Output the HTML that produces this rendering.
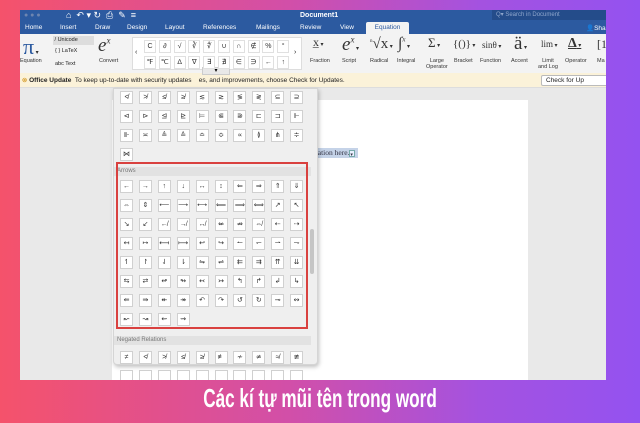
<!DOCTYPE html><html><head><meta charset="utf-8"><style>
*{margin:0;padding:0;box-sizing:border-box}
body{width:640px;height:423px;overflow:hidden;background:linear-gradient(90deg,#f5526b 0%,#d24fa8 45%,#a452e0 75%,#9452f0 100%);font-family:"Liberation Sans",sans-serif;position:relative}
.a{position:absolute}
.win{left:20px;top:10px;width:586px;height:370px;background:#e9e9e9;overflow:hidden}
.tb{left:0;top:0;width:586px;height:24px;background:#2c5aa0;color:#fff;font-size:7px}
.tab{position:absolute;top:14px;font-size:6.5px;color:#fff}
.rib{left:0;top:24px;width:586px;height:39px;background:#f3f3f3;font-size:5.5px;color:#222}
.ic{position:absolute;top:3px;font-family:"Liberation Serif",serif;font-size:14px;color:#333;white-space:nowrap}
.lb{position:absolute;top:24px;font-size:5.5px;color:#333;text-align:center;white-space:nowrap}
.upd{left:0;top:63px;width:586px;height:15px;background:#fbf2d9;border-bottom:1px solid #ddd;font-size:6.5px;color:#222;line-height:15px}
.page{left:92px;top:90px;width:416px;height:280px;background:#fff}
.pan{left:93px;top:78px;width:205px;height:277px;background:#efefef;border:1px solid #d5d5d5;box-shadow:1px 2px 4px rgba(0,0,0,.25);border-radius:0 0 4px 4px}
.c{position:absolute;width:13px;height:13px;background:#fff;border:1px solid #d0d0d0;font-size:7px;line-height:12px;text-align:center;color:#333}
.lbl{position:absolute;left:0;width:197px;height:9px;background:#e2e2e2;font-size:6px;color:#777;padding-left:3px;line-height:9px}
.cap{left:0;top:383px;width:640px;text-align:center;color:#fff;font-family:"Liberation Sans Narrow","Liberation Sans",sans-serif;font-weight:bold;font-size:26px;transform:scaleX(.66)}
.sg{position:absolute;width:12px;height:13px;background:#fff;border:1px solid #e0e0e0;font-size:7px;text-align:center;line-height:12px;color:#333}
</style></head><body>
<div class="a win">
 <div class="a tb">
  <div class="a" style="left:4px;top:2px;color:#6d85b0;font-size:7px">● ● ●</div>
  <div class="a" style="left:46px;top:0px;font-size:9px">⌂ &nbsp;↶ ▾ ↻ &nbsp;⎙ &nbsp;✎ &nbsp;≡</div>
  <div class="a" style="left:280px;top:2px;font-weight:bold;font-size:7px">Document1</div>
  <div class="a" style="left:472px;top:0px;width:114px;height:10px;background:#244c8a;color:#8fa6cc;font-size:6px;padding-left:4px;line-height:10px">Q▾ Search in Document</div>
  <span class="tab" style="left:5px">Home</span><span class="tab" style="left:40px">Insert</span><span class="tab" style="left:75px">Draw</span><span class="tab" style="left:107px">Design</span><span class="tab" style="left:145px">Layout</span><span class="tab" style="left:183px">References</span><span class="tab" style="left:236px">Mailings</span><span class="tab" style="left:280px">Review</span><span class="tab" style="left:320px">View</span>
  <div class="a" style="left:346px;top:12px;width:43px;height:12px;background:#f3f3f3;color:#2c5aa0;font-size:6.5px;text-align:center;line-height:12px;border-radius:2px 2px 0 0">Equation</div>
  <div class="a" style="left:566px;top:14px;font-size:6.5px">👤Sha</div>
 </div>
 <div class="a rib">
  <div class="ic" style="left:3px;top:0;font-size:22px;color:#2c5aa0">π<span style="font-size:6px;color:#333"> ▾</span></div>
  <div class="lb" style="left:0">Equation</div>
  <div class="a" style="left:33px;top:2px;width:41px;height:9px;background:#ddd;line-height:9px">&nbsp;/ Unicode</div>
  <div class="a" style="left:35px;top:14px">{ } LaTeX</div>
  <div class="a" style="left:35px;top:27px">abc Text</div>
  <div class="ic" style="left:78px;top:1px;font-size:19px;font-style:italic">e<sup style="font-size:9px">x</sup></div>
  <div class="lb" style="left:79px">Convert</div>
  <div class="a" style="left:112px;top:3px;width:170px;height:33px;background:#fff;border:1px solid #ddd"></div>
  <div class="a" style="left:115px;top:15px;font-size:7px">‹</div><div class="a" style="left:274px;top:15px;font-size:7px">›</div>
  <div class="ic" style="left:293px;top:1px;font-size:12px">x̲<span style="font-size:6px"> ▾</span></div>
  <div class="ic" style="left:322px;top:0px;font-size:19px;font-style:italic">e<sup style="font-size:9px">x</sup><span style="font-size:6px;font-style:normal"> ▾</span></div>
  <div class="ic" style="left:350px;top:2px;font-size:15px"><sup style="font-size:5px">n</sup>√x<span style="font-size:6px"> ▾</span></div>
  <div class="ic" style="left:378px;top:1px;font-size:16px;font-style:italic">∫<sup style="font-size:7px">x</sup><span style="font-size:6px;font-style:normal"> ▾</span></div>
  <div class="ic" style="left:408px;top:1px;font-size:13px">Σ<span style="font-size:6px"> ▾</span></div>
  <div class="ic" style="left:433px;top:4px;font-size:11px">{()}<span style="font-size:6px"> ▾</span></div>
  <div class="ic" style="left:462px;top:6px;font-size:9px">sinθ<span style="font-size:6px"> ▾</span></div>
  <div class="ic" style="left:494px;top:-1px;font-size:19px">ä<span style="font-size:6px"> ▾</span></div>
  <div class="ic" style="left:521px;top:5px;font-size:9px">lim<span style="font-size:6px"> ▾</span></div>
  <div class="ic" style="left:548px;top:2px;font-size:14px;font-weight:bold;text-decoration:underline">Δ<span style="font-size:6px;font-weight:normal"> ▾</span></div>
  <div class="ic" style="left:577px;top:3px;font-size:12px">[1</div>
  <div class="lb" style="left:290px">Fraction</div><div class="lb" style="left:322px">Script</div><div class="lb" style="left:350px">Radical</div><div class="lb" style="left:377px">Integral</div><div class="lb" style="left:406px">Large<br>Operator</div><div class="lb" style="left:434px">Bracket</div><div class="lb" style="left:460px">Function</div><div class="lb" style="left:491px">Accent</div><div class="lb" style="left:518px">Limit<br>and Log</div><div class="lb" style="left:545px">Operator</div><div class="lb" style="left:577px">Ma</div>
 </div>
 <div class="a upd">&nbsp;<span style="color:#c80">⊗</span> <b>Office Update</b>&nbsp; To keep up-to-date with security updates &nbsp; &nbsp;es, and improvements, choose Check for Updates.
  <span class="a" style="left:521px;top:2px;height:11px;line-height:10px;width:70px;border:1px solid #bbb;background:#fff;border-radius:2px;padding-left:4px">Check for Up</span></div>
 <div class="a page"></div>
 <div class="a" style="left:294px;top:138px;width:44px;height:10px;background:#c5d3e8;font-family:'Liberation Serif',serif;font-size:7.5px;color:#334;line-height:10px">uation here.<span style="display:inline-block;width:6px;height:7px;border:1px solid #7aa;background:#e8f0ff;font-size:5px;vertical-align:middle">▾</span></div>
 <div class="a" style="left:182px;top:57px;width:28px;height:8px;background:#e8e8e8;border:1px solid #ccc;font-size:6px;text-align:center;line-height:6px">▾</div>
 <div class="a pan" id="p">
  <div class="a" style="left:196px;top:140px;width:4px;height:45px;background:#c5c5c5;border-radius:2px"></div>
 </div>
</div>
<div class="a" style="left:116px;top:162px;width:192px;height:167px;border:2px solid #d9413f"></div>
<div class="a cap">Các kí tự mũi tên trong word</div>
<script>
var w=document.querySelector('.win'),g='';
[..."C∂√∛∜∪∩∉%°"].forEach(function(c,i){g+='<div class="sg" style="left:'+(124+i*14.8)+'px;top:30px">'+c+'</div>';});
[..."℉℃∆∇∃∄∈∋←↑"].forEach(function(c,i){g+='<div class="sg" style="left:'+(124+i*14.8)+'px;top:46px">'+c+'</div>';});
w.insertAdjacentHTML('beforeend',g);
var p=document.getElementById('p');
var rows=[
[2,"≮≯≰≱≲≳≶≷⊆⊇"],[21,"⊲⊳⊴⊵⊨⋐⋑⊏⊐⊩"],[40,"⊪≍≜≙≏≎∝≬⋔≑"],[59,"⋈"],
[91,"←→↑↓↔↕⇐⇒⇑⇓"],[110,"⇔⇕⟵⟶⟷⟸⟹⟺↗↖"],[129,"↘↙↚↛↮⇍⇏⇎⇠⇢"],[148,"↤↦⟻⟼↩↪↼↽⇀⇁"],
[167,"↿↾⇃⇂⇋⇌⇇⇉⇈⇊"],[186,"⇆⇄↫↬↢↣↰↱↲↳"],[205,"⇚⇛↞↠↶↷↺↻⊸↭"],[224,"↜↝⇜⇝"],
[262,"≠≮≯≰≱≢≁≄≉≇"],[281,"          "]];
var h='';
rows.forEach(function(r){[...r[1]].forEach(function(ch,i){h+='<div class="c" style="left:'+(6+i*18.9)+'px;top:'+r[0]+'px">'+ch+'</div>';});});
h+='<div class="lbl" style="top:78px">Arrows</div><div class="lbl" style="top:247px">Negated Relations</div>';
p.insertAdjacentHTML('beforeend',h);
</script>
</body></html>
